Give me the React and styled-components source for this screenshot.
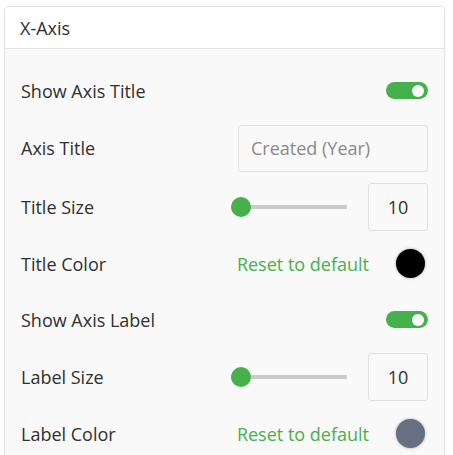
import React, { useState } from 'react'
import styled, { createGlobalStyle } from 'styled-components'

// theme
const green = '#46b04b'
const text = '#303030'
const line = '#e2e2e2'
const fs = '18px'

const GlobalStyle = createGlobalStyle`
  html, body {
    margin: 0;
    padding: 0;
    background: #fff;
    font-family: "Open Sans", "Noto Sans", sans-serif;
    color: ${text};
  }
  * { box-sizing: border-box; }
`

// styles

const Card = styled.section`
  margin: 6px 8px 0 4px;
  width: 441px;
  border: 1px solid ${line};
  border-radius: 4px;
  overflow: hidden;
  background: #f9f9f9;
`

const Header = styled.header`
  height: 42px;
  display: flex;
  align-items: center;
  padding: 0 15px;
  background: #fff;
  border-bottom: 1px solid ${line};
  font-size: ${fs};
`

const Body = styled.div`
  padding: 13px 16px 0 16px;
  display: flex;
  flex-direction: column;
`

const Row = styled.div`
  height: ${p => p.$h}px;
  display: flex;
  align-items: center;
  justify-content: space-between;
`

const Label = styled.span`
  font-size: ${fs};
  color: ${text};
`

const Controls = styled.div`
  display: flex;
  align-items: center;
  gap: ${p => p.$gap || 0}px;
`

const Toggle = styled.button`
  position: relative;
  width: 42px;
  height: 17px;
  border: none;
  padding: 0;
  border-radius: 9px;
  background: ${p => (p.$on ? green : '#ccc')};
  cursor: pointer;

  &::after {
    content: '';
    position: absolute;
    top: 2.5px;
    left: ${p => (p.$on ? '26px' : '3px')};
    width: 12px;
    height: 12px;
    border-radius: 50%;
    background: #fff;
  }
`

const TextInput = styled.input`
  width: 190px;
  height: 47px;
  border: 1px solid #e0e0e0;
  border-radius: 3px;
  background: #f9f9f9;
  padding: 0 12px;
  font-family: inherit;
  font-size: ${fs};
  color: ${text};
  outline: none;

  &::placeholder {
    color: #8a8a8a;
  }
`

const Slider = styled.div`
  position: relative;
  width: 116px;
  height: 20px;
  display: flex;
  align-items: center;

  &::before {
    content: '';
    flex: 1;
    height: 4px;
    background: #cbcbcb;
  }
`

const Thumb = styled.span`
  position: absolute;
  left: ${p => p.$pos}px;
  top: 0;
  width: 20px;
  height: 20px;
  border-radius: 50%;
  background: ${green};
`

const NumberBox = styled.div`
  width: 60px;
  height: 48px;
  border: 1px solid #e0e0e0;
  border-radius: 3px;
  display: flex;
  align-items: center;
  justify-content: center;
  font-size: ${fs};
  color: ${text};
`

const ResetLink = styled.a`
  color: ${green};
  font-size: ${fs};
  text-decoration: none;
  cursor: pointer;
`

const Swatch = styled.span`
  width: 29px;
  height: 29px;
  border-radius: 50%;
  background: ${p => p.$color};
  box-shadow: 0 0 3px rgba(0, 0, 0, 0.35);
  margin-right: 3px;
`

// render

const ToggleRow = ({ label }) => {
  const [on, setOn] = useState(true)
  return (
    <Row $h={57}>
      <Label>{label}</Label>
      <Toggle $on={on} onClick={() => setOn(!on)} aria-label={label} />
    </Row>
  )
}

const SizeRow = ({ label, value, h }) => (
  <Row $h={h}>
    <Label>{label}</Label>
    <Controls $gap={21}>
      <Slider>
        <Thumb $pos={0} />
      </Slider>
      <NumberBox>{value}</NumberBox>
    </Controls>
  </Row>
)

const ColorRow = ({ label, color }) => (
  <Row $h={55}>
    <Label>{label}</Label>
    <Controls $gap={27}>
      <ResetLink>Reset to default</ResetLink>
      <Swatch $color={color} />
    </Controls>
  </Row>
)

const App = () => {
  return (
    <>
      <GlobalStyle />
      <Card>
        <Header>X-Axis</Header>
        <Body>
          <ToggleRow label="Show Axis Title" />
          <Row $h={58}>
            <Label>Axis Title</Label>
            <TextInput placeholder="Created (Year)" />
          </Row>
          <SizeRow label="Title Size" value="10" h={59} />
          <ColorRow label="Title Color" color="#000" />
          <ToggleRow label="Show Axis Label" />
          <SizeRow label="Label Size" value="10" h={58} />
          <ColorRow label="Label Color" color="#667080" />
        </Body>
      </Card>
    </>
  )
}

export default App
